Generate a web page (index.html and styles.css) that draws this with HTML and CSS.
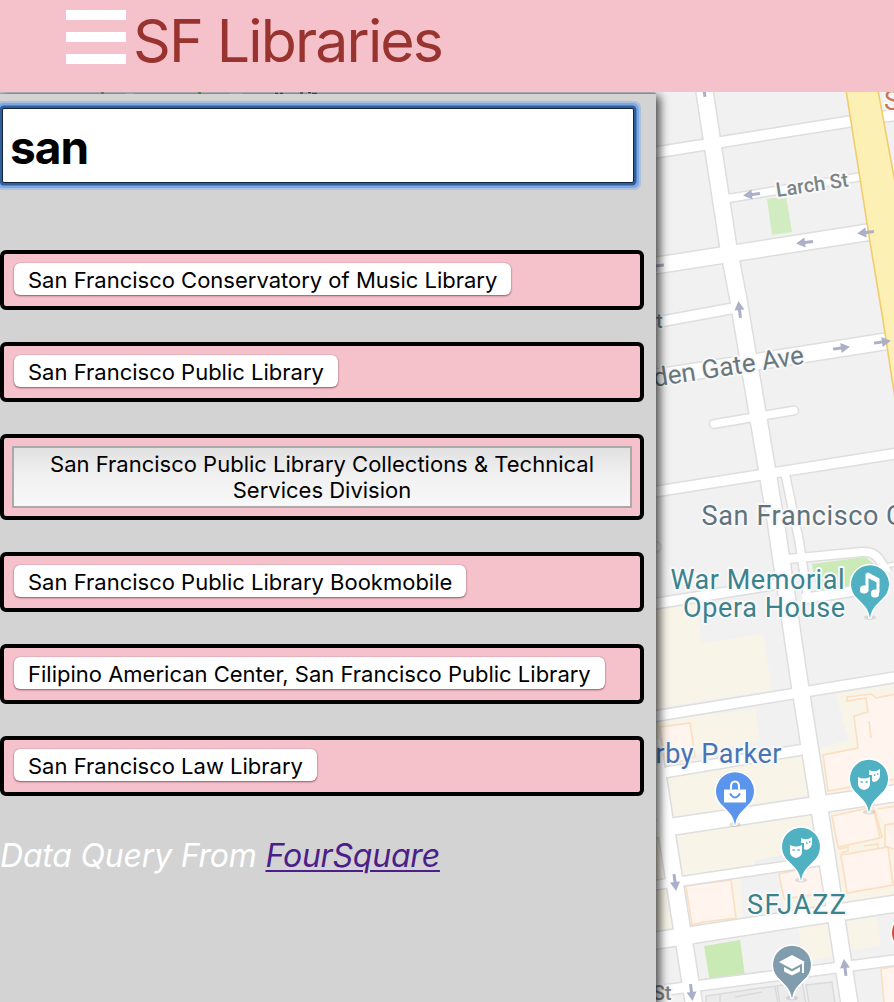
FILE: index.html
```html
<!DOCTYPE html>
<html lang="en">
<head>
<meta charset="utf-8">
<title>SF Libraries</title>
<link rel="stylesheet" href="styles.css">
</head>
<body>
<header class="header">
  <button class="menu" aria-label="Toggle menu"><span class="bar"></span><span class="bar"></span><span class="bar"></span></button>
  <h1 class="title">SF Libraries</h1>
</header>
<main class="stage">
  <svg class="map" viewBox="0 92 894 910" aria-label="Map">
    <defs>
      <g id="pin"><ellipse cx="0" cy="33" rx="6" ry="2.500" fill="#777" opacity=".2" stroke="none"/><path d="M0 34C-1.500 24-5 22-12 14.500A19 19 0 1 1 12 14.500C5 22 1.500 24 0 34Z" stroke="#fff" stroke-width="3" paint-order="stroke"/></g>
      <path id="arrow" d="M-9 0L0-5V-1.500H8V1.500H0V5Z" fill="#abb0c8"/>
      <g id="masks" fill="#fff"><path d="M-11-2Q-5 1 1-2V6Q0 10-5 11Q-10 10-11 6Z"/><path d="M0-9Q6-6 11-10V-3Q10 2 5 3L3 2V-4H0Z"/><path d="M-8.500 3h2.200M-3.500 3h2.200M5-4h1.500M8-5h1.500" stroke="#50b1c3" stroke-width="1.500"/></g>
    </defs>
    <rect y="92" width="894" height="910" fill="#f1f1f1"/>
    <!-- blocks -->
    <g fill="#f8f4e8">
      <path d="M650 611L698 604L701 643L763 634L772 690L650 709Z"/>
      <path d="M650 722L755 709L760 740L650 766Z"/>
      <path d="M667 777L802 755L808 795L674 818Z"/>
      <path d="M677 835L812 813L817 856L755 866L683 876Z"/>
      <path d="M650 835L659 835L664 878L650 881ZM650 891L666 888L672 928L650 932Z"/>
      <path d="M685 885L740 877L743 918L690 926ZM778 872L821 865L828 905L784 911Z"/>
      <path d="M798 928L828 924L835 956L804 962ZM847 921L877 917L881 945L850 951Z"/>
      <path d="M836 694L896 684V784L826 795L820 748L848 740Z"/>
      <path d="M829 811L896 801V895L843 904Z"/>
    </g>
    <path d="M755 861L782 855L785 860L754 865Z" fill="#eeeff0"/>
    <path d="M812 564L865 557L883 571L856 588L817 593Z" fill="#caeab7"/>
    <path d="M767 199L786 196L792 232L772 235Z" fill="#d1ecc0"/>
    <path d="M704 946L740 940L745 976L710 982Z" fill="#c9e9b5"/>
    <g fill="#fff4ee" stroke="#fbdfc0" stroke-width="1.600">
      <path d="M660 727L690 723L695 757L666 766Z"/>
      <path d="M686 886L731 880L736 918L703 922L692 925Z"/>
      <path d="M779 874L820 865L824 893L784 899Z"/>
      <path d="M847 697L871 694L876 698L896 694V779L828 791L823 755L858 748L854 716L868 712L866 698L847 701Z"/>
      <path d="M832 816L873 807L880 838L838 847Z"/>
      <path d="M841 855L888 847L893 885L847 893ZM878 809L896 806V823L885 825V846L896 850"/>
      <path d="M881 969L896 966V1004H884Z"/>
      <path d="M869 721L871 738M838 849L848 847V851L841 853M864 846L878 844V849M875 810L882 837L873 840" fill="none"/>
    </g>
    <g fill="#ebebeb" stroke="#dadada" stroke-width="1.500">
      <path d="M706 996L775 986L778 1004H706ZM720 994V1004M735 997L762 992M777 986L802 981L806 1004H780ZM806 985L832 982L835 1004H809Z"/>
    </g>
    <circle cx="656" cy="547" r="5" fill="none" stroke="#ddd" stroke-width="2"/>
    <g class="street-edge">
      <path d="M640 155L853 121M882 117L896 115" stroke-width="13"/>
      <path d="M728 198.500L862 176.500" stroke-width="10"/>
      <path d="M640 268L870 232M640 380L888 341" stroke-width="18.500"/>
      <path d="M650 323.500L740 307M650 492.500L896 453.500" stroke-width="12.500"/>
      <path d="M714 424L794 410.500" stroke-width="10.500" stroke-linecap="round"/>
      <path d="M785 473L799 540L808 600" stroke-width="10.500"/>
      <path d="M788 559L862 552Q873 551 879 559L888 573" stroke-width="11"/>
      <path d="M880 567L896 564" stroke-width="6"/>
      <path d="M650 604.500L784 583M802 599L872 588M650 717L896 677M650 775L812 748" stroke-width="12.500"/>
      <path d="M650 830L896 793M650 941.500L896 903.500" stroke-width="19"/>
      <path d="M650 886L826 860" stroke-width="11.500"/>
      <path d="M650 992L896 960" stroke-width="12.500"/>
      <path d="M652 740L667 835L694 1004M704 88L728 245L738.500 300L775.500 520L800 686L817 793L849.500 1004" stroke-width="19"/>
    </g>
    <g class="street-fill">
      <path d="M640 155L853 121M882 117L896 115" stroke-width="10"/>
      <path d="M728 198.500L862 176.500" stroke-width="7"/>
      <path d="M640 268L870 232M640 380L888 341" stroke-width="15.500"/>
      <path d="M650 323.500L740 307M650 492.500L896 453.500" stroke-width="9.500"/>
      <path d="M714 424L794 410.500" stroke-width="7.500" stroke-linecap="round"/>
      <path d="M785 473L799 540L808 600" stroke-width="7.500"/>
      <path d="M788 559L862 552Q873 551 879 559L888 573" stroke-width="8"/>
      <path d="M880 567L896 564" stroke-width="3"/>
      <path d="M650 604.500L784 583M802 599L872 588M650 717L896 677M650 775L812 748" stroke-width="9.500"/>
      <path d="M650 830L896 793M650 941.500L896 903.500" stroke-width="16"/>
      <path d="M650 886L826 860" stroke-width="8.500"/>
      <path d="M650 992L896 960" stroke-width="9.500"/>
      <path d="M652 740L667 835L694 1004M704 88L728 245L738.500 300L775.500 520L800 686L817 793L849.500 1004" stroke-width="16"/>
    </g>
    <path d="M846 90L870 242L883 320L896 405V188L878 90Z" fill="#fdf0b5" stroke="#f1cc6e" stroke-width="1.600"/>
    <!-- slivers of the map seen above the panel -->
    <rect y="92" width="655" height="2" fill="#c9c9c9"/>
    <path d="M0 93.500H126M134 93.500H230M242 93.500H656" stroke="#b0b0b0" fill="none"/>
    <path d="M101 93h3M198 93h3" stroke="#6c9a6c" stroke-width="2"/>
    <path d="M275 93.500h3M280 93.500h3M300 93h3M308 92.500h3M312 93.500h5" stroke="#555" stroke-width="1.500"/>
    <!-- one-way arrows -->
    <use href="#arrow" transform="translate(752 194.500) rotate(-7)"/>
    <use href="#arrow" transform="translate(805 242.500) rotate(-7)"/>
    <use href="#arrow" transform="translate(866 232.500) rotate(-7)"/>
    <use href="#arrow" transform="translate(656 266) rotate(-7)"/>
    <use href="#arrow" transform="translate(739.500 310) rotate(83)"/>
    <use href="#arrow" transform="translate(704 89) rotate(83)"/>
    <use href="#arrow" transform="translate(841 348) rotate(172)"/>
    <use href="#arrow" transform="translate(882 342) rotate(172)"/>
    <use href="#arrow" transform="translate(675 882) rotate(-97)"/>
    <use href="#arrow" transform="translate(691.500 992) rotate(-97)"/>
    <use href="#arrow" transform="translate(845 968) rotate(83)"/>
    <!-- labels -->
    <g class="label">
      <text class="minor" transform="translate(777 197) rotate(-8.500)" textLength="73">Larch St</text>
      <text class="minor" x="656" y="328">t</text>
      <text class="minor" x="671.500" y="1000" text-anchor="end">St</text>
      <text class="street" transform="translate(805 363.500) rotate(-8.800)" text-anchor="end">Golden Gate Ave</text>
      <text class="place" x="701.500" y="525" textLength="177">San Francisco</text>
      <text class="place" x="886" y="525">C</text>
      <text class="venue" x="670.500" y="589" textLength="174">War Memorial</text>
      <text class="venue" x="683" y="617" textLength="162">Opera House</text>
      <text class="shop" x="655.500" y="762.500" textLength="126">rby Parker</text>
      <text class="venue" x="747" y="913.500" textLength="99">SFJAZZ</text>
      <text class="food" x="884" y="110">S</text>
    </g>
    <!-- pins -->
    <g transform="translate(870 584.500)"><use href="#pin" fill="#50b1c3"/><path d="M-3-11L8-5V8M-3-11V7" fill="none" stroke="#fff" stroke-width="3"/><path d="M-3-11L9-6V-1L-3-7Z" fill="#fff"/><rect x="-10" y="1" width="8" height="8" rx="3.500" fill="#fff"/><rect x="1" y="5" width="8" height="8" rx="3.500" fill="#fff"/></g>
    <g transform="translate(735 791.500)"><use href="#pin" fill="#5b94ec"/><path d="M-11-2H11V11H-11Z" fill="#fff"/><path d="M-4-2V-5Q-4-10 0-10T4-5V-2" fill="none" stroke="#fff" stroke-width="2"/><path d="M-5 2Q0 10 5 2" fill="none" stroke="#5b94ec" stroke-width="2"/></g>
    <g transform="translate(869 779)"><use href="#pin" fill="#50b1c3"/><use href="#masks"/></g>
    <g transform="translate(801 847)"><use href="#pin" fill="#50b1c3"/><use href="#masks"/></g>
    <g transform="translate(792 965)"><use href="#pin" fill="#819dad"/><path d="M-13-3L0-10L13-3L0 4Z M-8 2L0 6.500L8 2V6.500L0 10.500L-8 6.500Z M10-2H12V8H10Z" fill="#fff"/></g>
    <use href="#pin" fill="#d84a40" transform="translate(911 933)"/>
  </svg>
  <aside class="panel">
    <input class="search" type="text" value="san" aria-label="Filter libraries">
    <ul class="results">
      <li class="result"><button class="library">San Francisco Conservatory of Music Library</button></li>
      <li class="result"><button class="library">San Francisco Public Library</button></li>
      <li class="result"><button class="library library-tall">San Francisco Public Library Collections &amp; Technical Services Division</button></li>
      <li class="result"><button class="library">San Francisco Public Library Bookmobile</button></li>
      <li class="result"><button class="library">Filipino American Center, San Francisco Public Library</button></li>
      <li class="result"><button class="library">San Francisco Law Library</button></li>
    </ul>
    <p class="credit">Data Query From <a class="credit-link" href="#">FourSquare</a></p>
  </aside>
</main>
</body>
</html>
```
FILE: styles.css
```css
* { box-sizing: border-box; }
body { margin: 0; height: 1002px; overflow: hidden; font-family: Inter, "Liberation Sans", sans-serif; }
.header { display: flex; height: 92px; padding: 10px 0 0 66px; background: #f5c1cb; }
.menu { display: flex; flex-direction: column; gap: 12px; width: 60px; padding: 0; border: 0; background: none; }
.bar { height: 10px; width: 60px; background: #fff; }
.title { margin: -5px 0 0 7px; font-size: 59px; line-height: 72px; font-weight: 400; letter-spacing: -1.85px; color: #98332f; white-space: nowrap; }
.stage { position: relative; height: 910px; padding-top: 2px; overflow: hidden; }
.map { position: absolute; inset: 0; width: 894px; height: 910px; }
.street-edge { fill: none; stroke: #dedede; }
.street-fill { fill: none; stroke: #fff; }
.label { font-family: Roboto, sans-serif; paint-order: stroke; stroke: #f8f8f8; stroke-width: 4px; stroke-linejoin: round; }
.minor { font-size: 20px; font-weight: 500; fill: #7b8487; }
.street { font-size: 26px; fill: #68777e; }
.place { font-size: 27px; fill: #5f737f; }
.venue { font-size: 27px; fill: #3a828d; }
.shop { font-size: 27px; fill: #4873b4; }
.food { font-size: 27px; fill: #cb7554; }
.panel { position: relative; width: 656px; height: 908px; padding-top: 13px; background: #d3d3d3; box-shadow: 3px 3px 9px 1px rgba(0, 0, 0, .7); }
.search { display: block; width: 632px; height: 75px; margin: 1px 0 0 2px; padding: 2px 7px 0; border: 1px solid #14243b; border-radius: 2px; outline: 0; background: #fff; font: 700 46px/60px Inter, sans-serif; letter-spacing: -1px; color: #000; box-shadow: 0 0 0 2.5px #315f9b, 0 0 0 5px #7ba8e6, 0 0 0 7px #adbfdb; }
.results { display: grid; gap: 32px; margin: 67px 0 0; padding: 0; list-style: none; }
.result { width: 644px; min-height: 60px; padding: 8px; border: 4px solid #000; border-radius: 6px; background: #f5c1cb; }
.library { display: block; margin: 1px 0 0 2px; height: 32px; padding: 0 14px; border: 0; border-radius: 6px; background: #fff; font: 400 22px/34px Inter, sans-serif; letter-spacing: 0; color: #000; box-shadow: 0 1px 2px rgba(80, 30, 40, .6), 0 0 1px rgba(80, 30, 40, .5); }
.library-tall { width: 620px; height: 62px; margin: 0; padding: 3px 12px; border: 2px solid #aaa; border-radius: 0; background: linear-gradient(#e1e1e1, #f0f0f0 45%, #f8f8f8); line-height: 26px; box-shadow: none; }
.credit { margin: 40px 0 0; font-size: 32px; line-height: 40px; font-style: italic; letter-spacing: -.2px; color: #fff; white-space: nowrap; }
.credit-link { color: #4c1e8a; text-decoration-thickness: 2px; text-underline-offset: 3px; }
```
